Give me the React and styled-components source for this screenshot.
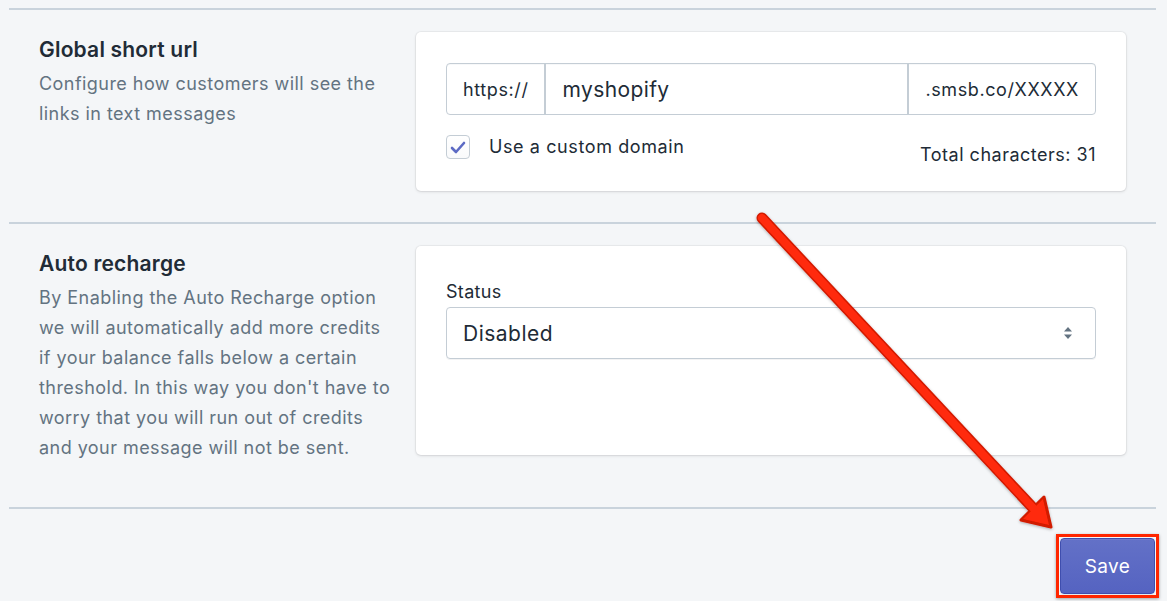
import React from "react";
import styled, { createGlobalStyle } from "styled-components";

const GlobalStyle = createGlobalStyle`
    html, body {
        margin: 0;
        padding: 0;
        background: #f4f6f8;
        font-family: Inter, "Noto Sans", "Liberation Sans", sans-serif;
        color: #212b36;
    }
`
const Page = styled.div`
    position: relative;
    height: 601px;
    overflow: hidden;
    padding: 0 11px 0 9px;
`
const Section = styled.section`
    border-top: 2px solid #c9d3dc;
    margin-top: ${props => props.$first ? "8px" : "0"};
    padding: 22px 30px ${props => props.$pb || 31}px 30px;
    display: grid;
    grid-template-columns: 353px 710px;
    column-gap: 24px;
    align-items: start;
`
const Intro = styled.div`
    padding-top: 4px;
`
const Title = styled.h2`
    margin: 0 0 5px;
    font-size: 21px;
    line-height: 28px;
    font-weight: 600;
    color: #212b36;
    letter-spacing: 0.2px;
`
const Description = styled.p`
    margin: 0;
    font-size: 18px;
    line-height: 30px;
    letter-spacing: 0.45px;
    color: #637381;
`
const Card = styled.div`
    background: #fff;
    border-radius: 5px;
    box-shadow: 0 0 0 1px rgba(63, 63, 68, 0.05), 0 1px 3px 0 rgba(63, 63, 68, 0.15);
    padding: ${props => props.$pad || "31px 30px 24px"};
    min-height: ${props => props.$minH || 0}px;
    box-sizing: border-box;
`
const InputGroup = styled.div`
    display: flex;
    height: 52px;
    border: 1px solid #c4cdd5;
    border-radius: 4px;
    box-sizing: border-box;
    box-shadow: inset 0 1px 0 rgba(99, 115, 129, 0.05);
`
const Addon = styled.div`
    display: flex;
    align-items: center;
    padding: 0 16px;
    font-size: 18px;
    letter-spacing: 0.6px;
    color: #212b36;
    border-left: ${props => props.$left ? "2px solid #c4cdd5" : "none"};
    border-right: ${props => props.$right ? "2px solid #c4cdd5" : "none"};
    white-space: nowrap;
`
const TextValue = styled.div`
    flex: 1;
    display: flex;
    align-items: center;
    padding: 0 16px;
    font-size: 21px;
    letter-spacing: 0.4px;
    color: #212b36;
`
const OptionsRow = styled.div`
    display: flex;
    justify-content: space-between;
    align-items: flex-start;
    margin-top: 20px;
`
const CheckLabel = styled.label`
    display: flex;
    align-items: center;
    gap: 19px;
    font-size: 18px;
    line-height: 24px;
    letter-spacing: 0.6px;
    color: #212b36;
`
const CheckBox = styled.span`
    width: 24px;
    height: 24px;
    box-sizing: border-box;
    border: 1px solid #c4cdd5;
    border-radius: 4px;
    background: linear-gradient(#fff, #f9fafb);
    display: flex;
    align-items: center;
    justify-content: center;
`
const Counter = styled.span`
    margin-top: 8px;
    font-size: 18px;
    line-height: 24px;
    letter-spacing: 0.5px;
    color: #212b36;
`
const FieldLabel = styled.div`
    font-size: 18px;
    line-height: 24px;
    letter-spacing: 0.3px;
    margin-bottom: 3px;
    color: #212b36;
`
const Select = styled.div`
    height: 52px;
    border: 1px solid #c4cdd5;
    border-radius: 4px;
    box-sizing: border-box;
    display: flex;
    align-items: center;
    justify-content: space-between;
    padding: 0 22px 0 16px;
    font-size: 21px;
    letter-spacing: 0.5px;
    color: #212b36;
    box-shadow: 0 1px 0 rgba(22, 29, 37, 0.05);
`
const Footer = styled.div`
    border-top: 2px solid #c9d3dc;
    display: flex;
    justify-content: flex-end;
    padding-top: 25px;
`
const SaveFrame = styled.span`
    display: flex;
    padding: 1px;
    border: 3px solid #ff2600;
    margin-right: -3px;
    box-shadow: 0 1px 3px rgba(0, 0, 0, 0.35);
`
const SaveButton = styled.button`
    width: 95px;
    height: 56px;
    border-radius: 4px;
    border: 1px solid #3f4eae;
    background: linear-gradient(180deg, #6371c7, #5563c1);
    box-shadow: inset 0 1px 0 0 #6f7bcb, 0 1px 0 0 rgba(22, 29, 37, 0.05);
    color: #fff;
    font-family: inherit;
    font-size: 19px;
    letter-spacing: 0.4px;
`
const Overlay = styled.svg`
    position: absolute;
    left: 0;
    top: 0;
    pointer-events: none;
`

function Arrow() {
    return (
        <Overlay width="1167" height="601" viewBox="0 0 1167 601">
            <defs>
                <filter id="sh" x="-10%" y="-10%" width="120%" height="120%">
                    <feDropShadow dx="0" dy="1" stdDeviation="1.5" floodColor="#000" floodOpacity="0.3" />
                </filter>
            </defs>
            <g filter="url(#sh)">
                <line x1="762" y1="218" x2="1034" y2="509" stroke="#d11a00" strokeWidth="11" strokeLinecap="round" />
                <polygon points="1051,527 1021,520 1044,497" fill="#d11a00" stroke="#d11a00" strokeWidth="3" strokeLinejoin="round" />
                <line x1="762" y1="218" x2="1034" y2="509" stroke="#ff2a0a" strokeWidth="8" strokeLinecap="round" />
                <polygon points="1049,525 1023,519 1043,499" fill="#ff2a0a" />
            </g>
        </Overlay>
    )
}

function App() {
    return (
        <Page>
            <GlobalStyle />
            <Section $first>
                <Intro>
                    <Title>Global short url</Title>
                    <Description>Configure how customers will see the links in text messages</Description>
                </Intro>
                <Card>
                    <InputGroup>
                        <Addon $right>https://</Addon>
                        <TextValue>myshopify</TextValue>
                        <Addon $left>.smsb.co/XXXXX</Addon>
                    </InputGroup>
                    <OptionsRow>
                        <CheckLabel>
                            <CheckBox>
                                <svg width="16" height="13" viewBox="0 0 16 13">
                                    <path d="M2 7 L6 11 L14 2" fill="none" stroke="#5c6ac4" strokeWidth="2.6" strokeLinecap="round" strokeLinejoin="round" />
                                </svg>
                            </CheckBox>
                            Use a custom domain
                        </CheckLabel>
                        <Counter>Total characters: 31</Counter>
                    </OptionsRow>
                </Card>
            </Section>
            <Section $pb={44}>
                <Intro>
                    <Title>Auto recharge</Title>
                    <Description>
                        By Enabling the Auto Recharge option we will automatically add more credits if your balance falls below a certain threshold. In this way you don't have to worry that you will run out of credits and your message will not be sent.
                    </Description>
                </Intro>
                <Card $pad="34px 30px 30px" $minH={209}>
                    <FieldLabel>Status</FieldLabel>
                    <Select>
                        Disabled
                        <svg width="10" height="14" viewBox="0 0 10 14">
                            <path d="M5 1 L9 5.5 L1 5.5 Z" fill="#637381" />
                            <path d="M5 13 L9 8.5 L1 8.5 Z" fill="#637381" />
                        </svg>
                    </Select>
                </Card>
            </Section>
            <Footer>
                <SaveFrame>
                    <SaveButton>Save</SaveButton>
                </SaveFrame>
            </Footer>
            <Arrow />
        </Page>
    )
}

export default App;
